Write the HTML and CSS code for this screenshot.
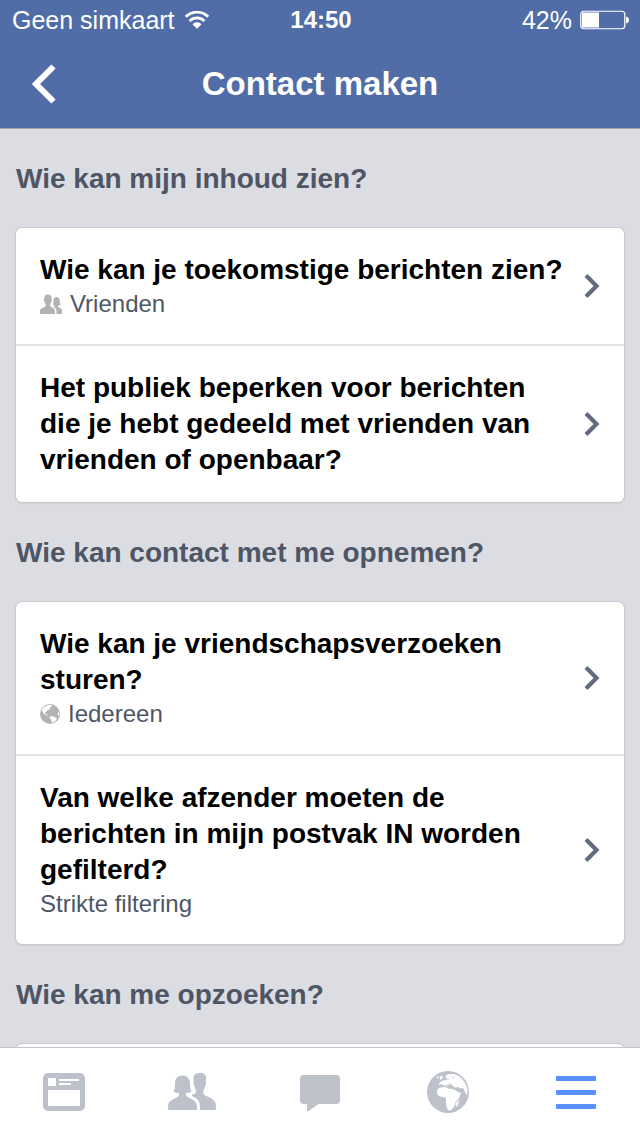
FILE: index.html
```html
<!DOCTYPE html>
<html lang="nl">
<head>
<meta charset="utf-8">
<meta name="viewport" content="width=device-width, initial-scale=1">
<title>Contact maken</title>
<link rel="stylesheet" href="styles.css">
</head>
<body>
<svg class="defs" aria-hidden="true">
  <symbol id="chevron" viewBox="0 0 16 24"><path d="M2 1.500 12.500 12 2 22.500" fill="none" stroke="currentColor" stroke-width="4.200"/></symbol>
</svg>
<div class="app">
  <header class="top">
    <div class="status">
      <div class="carrier">
        <span>Geen simkaart</span>
        <svg width="24" height="18" viewBox="0 0 24 18" aria-hidden="true"><g fill="none" stroke="#fff" stroke-width="2.800"><path d="M.8 5.800a15.800 15.800 0 0 1 22.400 0"/><path d="M4.600 10a10.500 10.500 0 0 1 14.800 0"/></g><path d="M7.500 13.200a6.300 6.300 0 0 1 9 0L12 17.800Z" fill="#fff"/></svg>
      </div>
      <time class="clock">14:50</time>
      <div class="power">
        <span>42%</span>
        <svg width="50" height="20" viewBox="0 0 50 20" aria-hidden="true"><rect x=".75" y="1.250" width="44" height="17.500" rx="3" fill="none" stroke="#fff" stroke-width="1.200"/><path d="M2 2.500h17v15H2ZM46 6.500q3 .5 3 3.500t-3 3.500Z" fill="#fff"/></svg>
      </div>
    </div>
    <nav class="nav">
      <button class="back" type="button" aria-label="Terug"><svg width="24" height="40" viewBox="0 0 24 40"><path d="M21.500 2.500 4 20 21.500 37.500" fill="none" stroke="#fff" stroke-width="6"/></svg></button>
      <h1 class="title">Contact maken</h1>
    </nav>
  </header>

  <main class="content">
    <h2 class="heading">Wie kan mijn inhoud zien?</h2>
    <div class="card">
      <a class="row" href="#">
        <span class="text">
          <span class="question">Wie kan je toekomstige berichten zien?</span>
          <span class="answer">
            <svg width="22" height="20" viewBox="0 0 22 20" aria-hidden="true"><path fill="#b3b3b3" d="M8 .5c2.800 0 3.900 1.900 3.700 4.800.5.800.3 1.900-.4 2.300-.2 1.300-.6 2.100-1.100 2.700v2c1.600 1.600 4.800 1.600 4.800 5V20H0v-2.700c0-3.400 4-3.400 5.600-5v-2C5.100 9.700 4.700 8.900 4.500 7.600c-.7-.4-.9-1.500-.4-2.300C3.900 2.400 5.200.5 8 .5ZM16.500 3c2.300 0 3.200 1.600 3.200 3.500 0 2 .3 3 1 4-.8.700-1.700.8-2.500.8v1.500c1.400 1.200 3.800 1.500 3.800 4.200v3h-5.500v-3c0-2.500-1.500-3.500-3.300-4.500.7-.3 1.300-.6 1.300-1.200-.6 0-1.300-.3-1.800-.8.600-1 .8-2.400.8-4C13.500 4.500 14.500 3 16.500 3Z"/></svg>
            Vrienden
          </span>
        </span>
        <svg class="chevron" width="16" height="24"><use href="#chevron"/></svg>
      </a>
      <a class="row" href="#">
        <span class="text"><span class="question">Het publiek beperken voor berichten die je hebt gedeeld met vrienden van vrienden of openbaar?</span></span>
        <svg class="chevron" width="16" height="24"><use href="#chevron"/></svg>
      </a>
    </div>

    <h2 class="heading">Wie kan contact met me opnemen?</h2>
    <div class="card">
      <a class="row" href="#">
        <span class="text">
          <span class="question">Wie kan je vriendschapsverzoeken sturen?</span>
          <span class="answer">
            <svg width="20" height="20" viewBox="0 0 20 20" aria-hidden="true"><circle cx="10" cy="10" r="10" fill="#b3b3b3"/><path fill="#fff" d="M4 3.200 7 1.500 11 .8 12 2 9.500 4l.5 2-2-.5L6.500 7.500 5 8.500l.5 1.500 2.500 1-1 .7L4 10 2.500 7.500 1.500 6Q2.500 4.200 4 3.200ZM9 13l3-1 3 1.300 2 1-1.500 2.700L12 19l-1-3.500ZM18.300 8l1 1-.2 3-1.600-1.500Z"/></svg>
            Iedereen
          </span>
        </span>
        <svg class="chevron" width="16" height="24"><use href="#chevron"/></svg>
      </a>
      <a class="row" href="#">
        <span class="text">
          <span class="question">Van welke afzender moeten de berichten in mijn postvak IN worden gefilterd?</span>
          <span class="answer">Strikte filtering</span>
        </span>
        <svg class="chevron" width="16" height="24"><use href="#chevron"/></svg>
      </a>
    </div>

    <h2 class="heading">Wie kan me opzoeken?</h2>
    <div class="card"><a class="row" href="#" aria-label="Meer"></a></div>
  </main>

  <nav class="tabs">
    <button class="tab" type="button" aria-label="Nieuws"><svg width="42" height="38" viewBox="0 0 42 38"><rect width="42" height="38" rx="5" fill="currentColor"/><g fill="#fff"><rect x="5" y="5" width="8" height="8" rx="1"/><path d="M16 6h20v2H16ZM16 10h12v2H16Z"/><rect x="5" y="17" width="32" height="16" rx="1"/></g></svg></button>
    <button class="tab" type="button" aria-label="Vrienden"><svg width="48" height="38" viewBox="0 0 48 38"><path fill="currentColor" d="M14.500 2.500C19.500 2.500 22 6 22 10.500c0 4 .3 6 1.500 8-1.400 1.200-3.500 1.500-5.500 1.500v2.500c2.500 3.500 11 3.500 11 11V36q0 1-1 1H1q-1 0-1-1v-2.500c0-7.500 8.500-7.500 11-11V20c-2 0-4.100-.3-5.500-1.500 1.200-2 1.500-4 1.500-8 0-4.500 2.500-8 7.500-8ZM32 0c4.500 0 6.300 2 6 5.500l-.3 3.500c.7 1 .3 3.500-.7 4-.3 2-.7 3-1.500 4v4c3 3.500 12.500 3.500 12.500 12V36q0 1-1 1H32v-3.500c0-6-3.500-8.500-8-10.500v-1.500c2-.3 3.500-1 4-2V17c-.8-1-1.200-2-1.500-4-1-.5-1.400-3-.7-4l-.3-3.500C25.200 2 27.500 0 32 0Z"/></svg></button>
    <button class="tab" type="button" aria-label="Berichten"><svg width="40" height="38" viewBox="0 0 40 38"><path fill="currentColor" d="M4 2h32q4 0 4 4v21q0 4-4 4H18.500L8 38.500H7V31H4q-4 0-4-4V6q0-4 4-4Z"/></svg></button>
    <button class="tab" type="button" aria-label="Meldingen"><svg width="42" height="42" viewBox="0 0 42 42"><circle cx="21" cy="21" r="21" fill="currentColor"/><path fill="#fff" d="M13 16.500l6-.5 2 1.500 5 .5 2 1 3 5h2.500l-2 4-3 3-1 4-3 4-3 .5-1.500-2-1-5v-4l-1.500-2.500-4.500-.5q-3-1-3-4c0-3 1-4 3-5ZM18 5.500l3-2.500h6l5 2 4 4 4 7 .8 5-.8 3-2-3-2-4-3 .5-2-1.500-3 .5-5-3-3 2-4-1-1-1.500-3 1v-2l4-2.500 3-.5 1-2ZM13 6l2-2 .8 3-2.800 2ZM10 5.500h1.500v2H10ZM28 19l4 2.500 3 1-3.500 1.500-2-1ZM30.500 30l1.500-1-1 5-1.500 2-1-3Z"/><path d="M16 14l5 .5 2-2M22 12l4 3M25 5.500l2 2M19 9l3-1" fill="none" stroke="currentColor" stroke-width=".8"/></svg></button>
    <button class="tab active" type="button" aria-label="Meer"><svg width="40" height="34" viewBox="0 0 40 34"><g fill="currentColor"><rect y="1" width="40" height="5" rx="1"/><rect y="15" width="40" height="5" rx="1"/><rect y="29" width="40" height="5" rx="1"/></g></svg></button>
  </nav>
</div>
</body>
</html>
```
FILE: styles.css
```css
* { box-sizing: border-box; }

body {
  margin: 0;
  font-family: "Liberation Sans", Arial, sans-serif;
  background: #dcdde2;
}

button {
  padding: 0;
  border: 0;
  background: none;
}

svg { display: block; flex: none; }

.defs { display: none; }

.app {
  display: flex;
  flex-direction: column;
  height: 100vh;
}

.top {
  background: #506da7;
  border-bottom: 1px solid #a5a6ab;
  color: #fff;
}

.status {
  display: grid;
  grid-template-columns: 1fr auto 1fr;
  align-items: center;
  height: 40px;
  padding: 0 10px 0 12px;
  font-size: 25px;
}

.carrier, .power {
  display: flex;
  align-items: center;
  gap: 10px;
}

.power {
  justify-content: flex-end;
  gap: 8px;
}

.clock { font-size: 24px; font-weight: bold; }

.nav {
  display: grid;
  grid-template-columns: 56px 1fr 56px;
  align-items: center;
  height: 88px;
}

.back { justify-self: end; }

.title {
  margin: 0;
  font-size: 33px;
  text-align: center;
}

.content {
  flex: 1;
  min-height: 0;
  overflow: hidden;
  padding: 0 16px;
}

.heading {
  margin: 0;
  padding: 33px 0 31px;
  font-size: 28px;
  line-height: 36px;
  color: #4e5665;
}

.heading:first-child { padding-top: 32px; }

.card {
  background: #fff;
  border-radius: 6px;
  box-shadow: 0 0 0 1px #c8c9d0, 0 1px 2px #b4b5bb;
}

.row {
  display: flex;
  align-items: center;
  justify-content: space-between;
  gap: 16px;
  padding: 24px;
  color: #000;
  text-decoration: none;
}

.row + .row { border-top: 2px solid #e3e3e5; }

.text { flex: 1; }

.question {
  display: block;
  font-size: 28px;
  font-weight: bold;
  line-height: 36px;
}

.answer {
  display: flex;
  align-items: center;
  gap: 8px;
  font-size: 24px;
  line-height: 32px;
  color: #4e5665;
}

.chevron { color: #636c7e; }

.tabs {
  display: grid;
  grid-template-columns: repeat(5, 1fr);
  height: 89px;
  border-top: 1px solid #c4c5ca;
  background: #fff;
}

.tab {
  display: flex;
  align-items: center;
  justify-content: center;
  color: #bcc1ca;
}

.active { color: #5890ff; }
```
